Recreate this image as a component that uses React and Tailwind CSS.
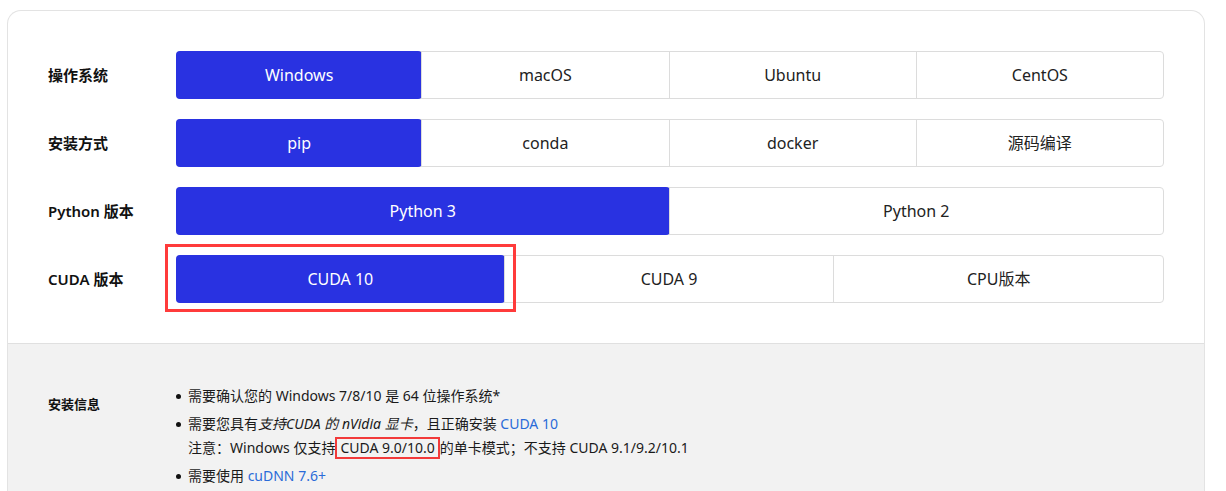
const FONT = { fontFamily: '"Noto Sans", "Noto Sans CJK SC", sans-serif' };

const ROWS = [
  { label: '操作系统', options: ['Windows', 'macOS', 'Ubuntu', 'CentOS'], active: 0 },
  { label: '安装方式', options: ['pip', 'conda', 'docker', '源码编译'], active: 0 },
  { label: 'Python 版本', options: ['Python 3', 'Python 2'], active: 0 },
  { label: 'CUDA 版本', options: ['CUDA 10', 'CUDA 9', 'CPU版本'], active: 0, marked: true },
];

function OptionRow({ row }) {
  return (
    <div className="flex items-center">
      <div className="w-[128px] shrink-0 text-[15px] font-semibold text-[#111]">{row.label}</div>
      <div className="relative flex-1">
        <div className="flex h-[48px] rounded-[4px] border border-[#dcdcdc] bg-white">
          {row.options.map((opt, i) => (
            <button
              key={opt}
              className={`flex-1 flex items-center justify-center text-[16px] ${
                i === row.active
                  ? 'bg-[#2932e1] text-white rounded-[4px] -m-px'
                  : 'text-[#222]'
              } ${i > 0 && i !== row.active ? 'border-l border-[#dcdcdc]' : ''}`}
            >
              {opt}
            </button>
          ))}
        </div>
        {row.marked && (
          <div className="absolute left-[-11px] top-[-11px] w-[351px] h-[68px] border-[3px] border-[#ff3b3b] pointer-events-none" />
        )}
      </div>
    </div>
  );
}

function Bullet() {
  return (
    <span className="w-[12px] shrink-0 h-[24px] flex items-center">
      <span className="w-[5px] h-[5px] rounded-full bg-[#111]" />
    </span>
  );
}

export default function App() {
  return (
    <div className="min-h-screen bg-white pt-[10px] pl-[7px] pr-[21px] overflow-hidden" style={FONT}>
      <div className="rounded-t-[14px] border border-b-0 border-[#e3e3e3] overflow-hidden">
        {/* selectors */}
        <div className="px-[40px] pt-[40px] pb-[40px] flex flex-col gap-[20px]">
          {ROWS.map((row) => (
            <OptionRow key={row.label} row={row} />
          ))}
        </div>

        {/* install info */}
        <div className="border-t border-[#e0e0e0] bg-[#f2f2f2] px-[40px] pt-[40px] pb-[80px] flex">
          <div className="w-[128px] shrink-0 pt-[11px] text-[13px] font-bold text-[#111]">安装信息</div>
          <ul className="text-[14px] leading-[24px] text-[#1a1a1a] flex flex-col gap-[4px]">
            <li className="flex">
              <Bullet />
              <span>需要确认您的 Windows 7/8/10 是 64 位操作系统*</span>
            </li>
            <li className="flex">
              <Bullet />
              <div>
                <div>
                  需要您具有<em>支持CUDA 的 nVidia 显卡</em>，且正确安装{' '}
                  <a className="text-[#2a6bd8]">CUDA 10</a>
                </div>
                <div>
                  注意：Windows 仅支持
                  <span className="inline-block leading-[18px] border-2 border-[#f23a3a] px-[3px]">CUDA 9.0/10.0</span>
                  的单卡模式；不支持 CUDA 9.1/9.2/10.1
                </div>
              </div>
            </li>
            <li className="flex">
              <Bullet />
              <span>
                需要使用 <a className="text-[#2a6bd8]">cuDNN 7.6+</a>
              </span>
            </li>
          </ul>
        </div>
      </div>
    </div>
  );
}
